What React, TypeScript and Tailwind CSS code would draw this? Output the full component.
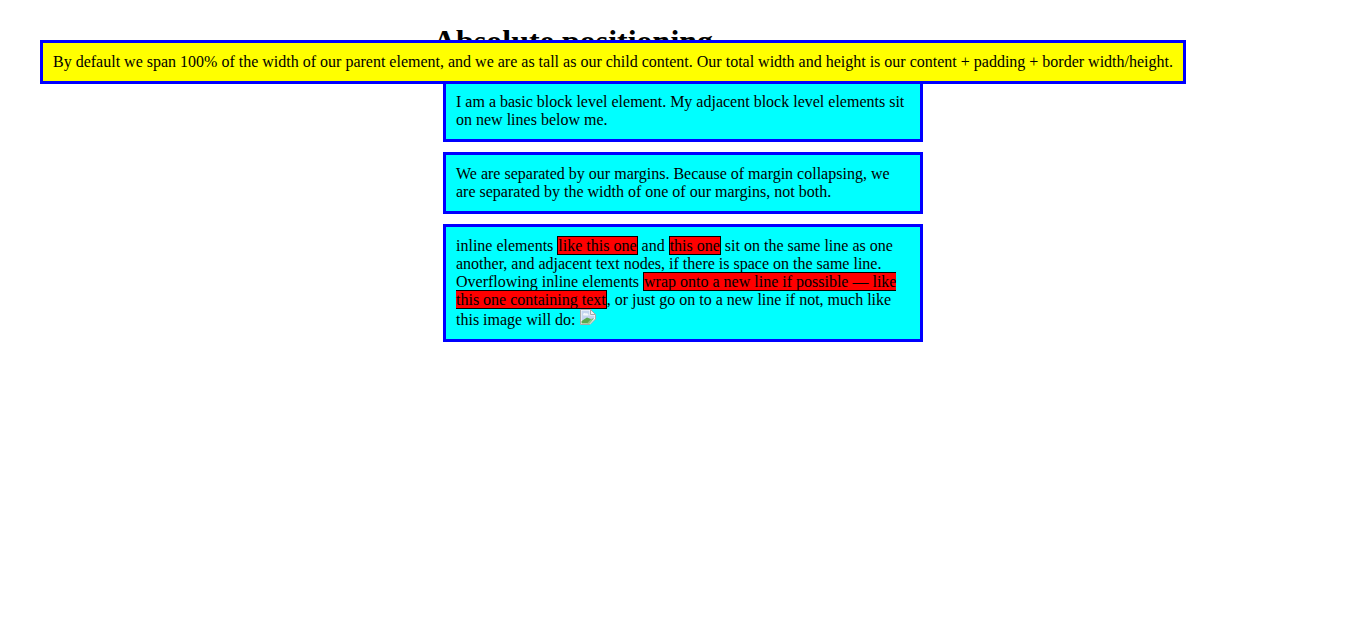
const BrokenImage = () => (
  <svg
    width="16"
    height="16"
    viewBox="0 0 16 16"
    className="inline align-baseline"
    role="img"
    aria-label="broken image"
  >
    <path d="M0.5 0.5H10.5L15.5 5.5V10L10 15.5H0.5Z" fill="#ffffff" stroke="#a8a8a8" />
    <path d="M10.5 0.5V5.5H15.5Z" fill="#f2f2f2" stroke="#a8a8a8" />
    <path d="M1.5 1.5H9.5V6.5H14.5V9L10 13.5L1.5 11Z" fill="#c4d4ef" />
    <path d="M3 5.5C3 4 5 3.5 6 4.5C7.5 4 8.5 5 8.5 6.5H3.5Z" fill="#f4f7fc" />
    <path d="M1.5 14.5V12L7 8.5L11 10L14 9.5L9.5 14.5Z" fill="#5aa84f" />
    <path d="M7 14.5L11 10L13.5 9.5L9.5 14.5Z" fill="#8fc587" />
  </svg>
);

const boxClass = "m-[10px] border-[3px] border-[#0000ff] bg-[#00ffff] p-[10px]";
const inlineClass = "border border-black bg-[#ff0000]";

export default function App() {
  return (
    <div className="relative min-h-[628px] bg-white font-['Liberation_Serif',serif] text-base leading-[normal] text-black">
      <div className="mx-auto w-[500px] pt-[23px]">
        <h1 className="mb-[20px] text-[32px] font-bold leading-[normal]">
          Absolute positioning
        </h1>
        <p className={boxClass}>
          I am a basic block level element. My adjacent block level elements sit
          on new lines below me.
        </p>
        <p className={boxClass}>
          We are separated by our margins. Because of margin collapsing, we are
          separated by the width of one of our margins, not both.
        </p>
        <p className={boxClass}>
          inline elements <span className={inlineClass}>like this one</span> and{" "}
          <span className={inlineClass}>this one</span> sit on the same line as
          one another, and adjacent text nodes, if there is space on the same
          line. Overflowing inline elements{" "}
          <span className={inlineClass}>
            wrap onto a new line if possible — like this one containing text
          </span>
          , or just go on to a new line if not, much like this image will do:{" "}
          <BrokenImage />
        </p>
      </div>
      <p className="absolute left-10 top-10 border-[3px] border-[#0000ff] bg-[#ffff00] p-[10px]">
        By default we span 100% of the width of our parent element, and we are as
        tall as our child content. Our total width and height is our content +
        padding + border width/height.
      </p>
    </div>
  );
}
